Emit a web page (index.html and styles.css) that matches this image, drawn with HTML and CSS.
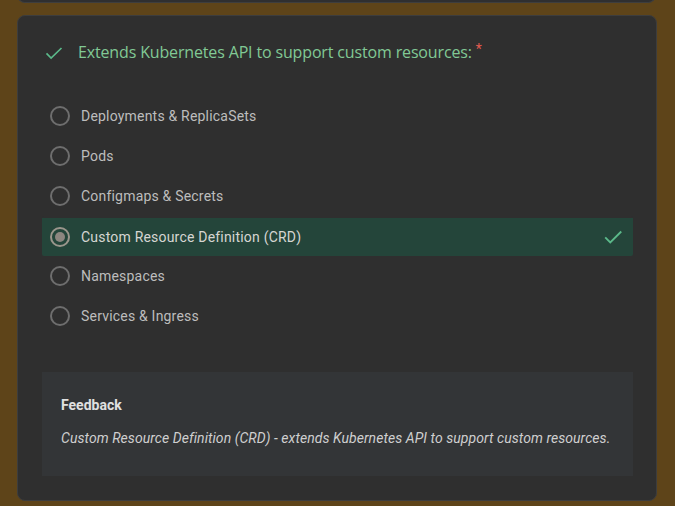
FILE: index.html
```html
<!DOCTYPE html>
<html>
<head>
<meta charset="utf-8">
<link rel="stylesheet" href="styles.css">
</head>
<body>
<div class="page">
  <div class="prev-card"></div>
  <div class="card">
    <div class="question">
      <svg class="qcheck" width="20" height="20" viewBox="0 0 24 24"><path d="M3 12.5l5.5 5.5L21 6" fill="none" stroke="#5bb98a" stroke-width="2"/></svg>
      <span class="qtext">Extends Kubernetes API to support custom resources:</span><span class="req">*</span>
    </div>
    <div class="options">
      <div class="option"><span class="radio"></span><span class="label">Deployments &amp; ReplicaSets</span></div>
      <div class="option"><span class="radio"></span><span class="label">Pods</span></div>
      <div class="option"><span class="radio"></span><span class="label">Configmaps &amp; Secrets</span></div>
      <div class="option selected"><span class="radio on"></span><span class="label">Custom Resource Definition (CRD)</span>
        <svg class="ocheck" width="22" height="22" viewBox="0 0 24 24"><path d="M3.5 12.5l5.5 5.5L21 6" fill="none" stroke="#5bb98a" stroke-width="2"/></svg>
      </div>
      <div class="option"><span class="radio"></span><span class="label">Namespaces</span></div>
      <div class="option"><span class="radio"></span><span class="label">Services &amp; Ingress</span></div>
    </div>
    <div class="feedback">
      <div class="fb-title">Feedback</div>
      <div class="fb-text">Custom Resource Definition (CRD) - extends Kubernetes API to support custom resources.</div>
    </div>
  </div>
</div>
</body>
</html>
```
FILE: styles.css
```css
html, body {
  margin: 0;
  padding: 0;
  background: #5e4419;
  font-family: Roboto, "Liberation Sans", sans-serif;
}
.page {
  width: 675px;
  height: 506px;
  overflow: hidden;
}
.prev-card {
  margin: -10px 19px 0 17px;
  height: 12px;
  background: #2f2f30;
  border: 1px solid #3e3e3e;
  border-top: none;
  border-radius: 0 0 8px 8px;
}
.card {
  margin: 12px 18px 0 17px;
  height: 486px;
  box-sizing: border-box;
  background: #2f2f2f;
  border: 1px solid #3d3d3d;
  border-radius: 8px;
  padding: 0 23px 0 24px;
}
.question {
  display: flex;
  align-items: center;
  height: 72px;
  padding-left: 2px;
  box-sizing: border-box;
}
.qcheck {
  flex: none;
  margin-right: 14px;
  margin-top: 2px;
}
.qtext {
  font-family: "Open Sans", Roboto, sans-serif;
  font-size: 16px;
  color: #81c995;
  letter-spacing: -0.15px;
}
.req {
  color: #e35b4f;
  font-size: 14px;
  margin-left: 4px;
  align-self: flex-start;
  margin-top: 25px;
}
.options {
  margin-top: 8px;
  display: flex;
  flex-direction: column;
}
.option {
  height: 40px;
  display: flex;
  align-items: center;
  padding-left: 8px;
  border-radius: 2px;
}
.option.selected {
  background: #24453a;
  border-top: 2px solid #2f2f2f;
  box-sizing: border-box;
  padding-top: 0;
}
.radio {
  width: 16px;
  height: 16px;
  border: 2px solid #6e6e6e;
  border-radius: 50%;
  flex: none;
  margin-right: 11px;
  display: flex;
  align-items: center;
  justify-content: center;
}
.radio.on {
  border-color: #9a968c;
}
.radio.on::after {
  content: "";
  width: 10px;
  height: 10px;
  border-radius: 50%;
  background: #8c8680;
}
.label {
  font-size: 14px;
  color: #bdbdbd;
  letter-spacing: 0.2px;
}
.selected .label {
  color: #d6d6d2;
}
.ocheck {
  margin-left: auto;
  margin-right: 9px;
}
.feedback {
  margin-top: 36px;
  height: 104px;
  background: #333537;
  padding: 25px 19px 0 19px;
  box-sizing: border-box;
}
.fb-title {
  font-size: 14px;
  font-weight: bold;
  color: #e0e0e0;
}
.fb-text {
  margin-top: 17px;
  font-size: 14px;
  font-style: italic;
  color: #cfcfcf;
  letter-spacing: 0.06px;
}
```
